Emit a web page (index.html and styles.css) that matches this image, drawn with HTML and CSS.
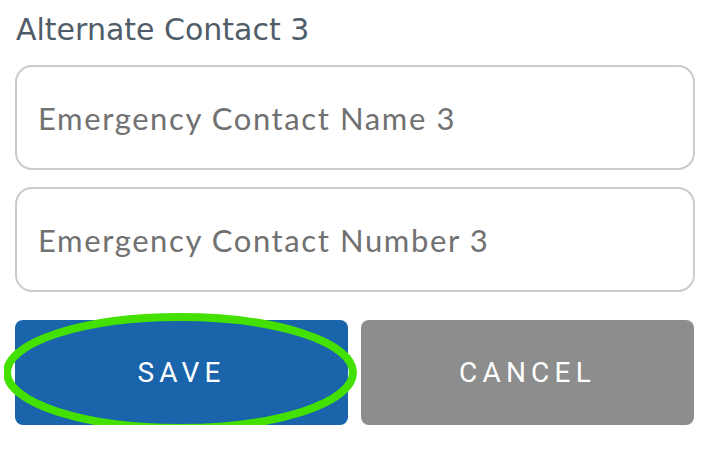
FILE: index.html
```html
<!DOCTYPE html>
<html lang="en">
<head>
  <meta charset="UTF-8" />
  <title>Alternate Contact</title>
  <link rel="stylesheet" href="styles.css">
</head>
<body>
  <div class="contact-form">
    <label class="section-label">Alternate Contact 3</label>
    <input type="text" class="field" placeholder="Emergency Contact Name 3" />
    <input type="tel" class="field" placeholder="Emergency Contact Number 3" />
    <div class="actions">
      <div class="btn-wrap">
        <button class="btn btn-save">SAVE</button>
        <!-- highlight ring drawn over the save button -->
        <svg class="highlight" viewBox="0 0 360 130" width="360" height="130">
          <ellipse cx="176" cy="64.5" rx="173" ry="55.5" fill="none" stroke="#44e000" stroke-width="8" />
        </svg>
      </div>
      <button class="btn btn-cancel">CANCEL</button>
    </div>
  </div>
</body>
</html>
```

FILE: styles.css
```css
* {
  box-sizing: border-box;
  margin: 0;
  padding: 0;
}

body {
  background: #fff;
  font-family: 'DejaVu Sans', sans-serif;
}

.contact-form {
  width: 713px;
  padding: 12px 19px 0 15px;
  display: flex;
  flex-direction: column;
}

.section-label {
  font-family: 'DejaVu Sans', sans-serif;
  font-size: 30px;
  color: #505d69;
  line-height: 36px;
  padding-left: 1px;
  margin-bottom: 17px;
}

.field {
  width: 680px;
  height: 105px;
  border: 2px solid #cbcbcb;
  border-radius: 17px;
  padding: 0 21px;
  font-family: 'Lato', sans-serif;
  font-size: 31px;
  letter-spacing: 1.6px;
  margin-bottom: 17px;
  outline: none;
}

.field::placeholder {
  color: #717171;
}

.actions {
  display: flex;
  gap: 13px;
  margin-top: 11px;
}

.btn-wrap {
  position: relative;
}

.btn {
  width: 333px;
  height: 105px;
  border: none;
  border-radius: 8px;
  color: #fff;
  font-family: 'Roboto', sans-serif;
  font-size: 28px;
  letter-spacing: 5.2px;
  padding-left: 0;
}

.btn-save {
  background-color: #1a64ac;
}

.btn-cancel {
  background-color: #8c8d8c;
}

.highlight {
  position: absolute;
  left: -11px;
  top: -12px;
  pointer-events: none;
}
```
